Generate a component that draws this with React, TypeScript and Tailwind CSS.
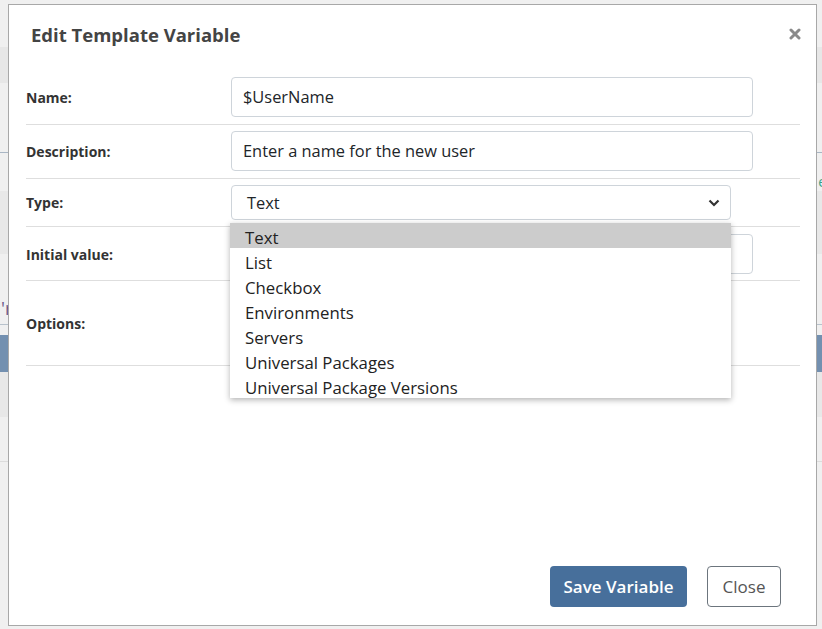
const font = "font-['Open_Sans','Noto_Sans',sans-serif]";

const options = [
  "Text",
  "List",
  "Checkbox",
  "Environments",
  "Servers",
  "Universal Packages",
  "Universal Package Versions",
];

// the page behind the modal; only its edges show
function Backdrop() {
  return (
    <div className="flex h-full flex-col">
      <div className="h-[47px]" />
      <div className="h-[36px] bg-[#e7e7e7]" />
      <div className="h-[69px]" />
      <div className="h-px bg-[#a9b6c4]" />
      <div className="flex h-[38px] items-end justify-end text-[14px] leading-[14px] text-[#3aa08a]">
        <span className="mr-[-4px] pb-[2px]">e</span>
      </div>
      <div className="h-[63px] bg-[#e8e8e8]" />
      <div className="h-[70px] pt-[44px] pl-px text-[18px] leading-[20px] text-[#6b5b8a]">'r</div>
      <div className="h-px bg-[#b8c2cc]" />
      <div className="h-[10px]" />
      <div className="h-[37px] bg-[#7390b0]" />
      <div className="h-[45px] bg-[#e8e8e8]" />
      <div className="h-[44px]" />
      <div className="h-px bg-[#dcdcdc]" />
    </div>
  );
}

function Row({
  label,
  className,
  children,
}: {
  label: string;
  className: string;
  children?: React.ReactNode;
}) {
  return (
    <div className={`flex items-center border-b border-[#dedede] ${className}`}>
      <div className="w-[205px] shrink-0 text-[14px] font-bold text-[#333]">{label}</div>
      <div className="relative">{children}</div>
    </div>
  );
}

function TextBox({ value }: { value: string }) {
  return (
    <div className="flex h-[40px] w-[522px] items-center rounded-[4px] border border-[#ced4da] px-[11px] text-[16.4px] text-[#212529]">
      {value}
    </div>
  );
}

export default function App() {
  return (
    <div className={`relative h-[629px] w-[822px] overflow-hidden bg-[#f0f0f0] ${font}`}>
      <Backdrop />

      <div className="absolute left-[8px] top-[4px] flex h-[622px] w-[809px] flex-col border border-[#a8a8a8] bg-white">
        <div className="flex h-[59px] items-center justify-between pl-[22px] pr-[15px]">
          <h1 className="text-[18.5px] font-bold text-[#444]">Edit Template Variable</h1>
          <svg width="12" height="12" viewBox="0 0 12 12" className="mb-[1px]">
            <path d="M2 2 L10 10 M10 2 L2 10" stroke="#8a8a8a" strokeWidth="3" strokeLinecap="round" />
          </svg>
        </div>

        <div className="pl-[17px] pr-[16px]">
          <Row label="Name:" className="pt-[13px] pb-[7px]">
            <TextBox value="$UserName" />
          </Row>
          <Row label="Description:" className="pt-[6px] pb-[7px]">
            <TextBox value="Enter a name for the new user" />
          </Row>
          <Row label="Type:" className="pt-[6px] pb-[6px]">
            <div className="flex h-[35px] w-[500px] items-center justify-between rounded-[4px] border border-[#ced4da] pl-[15px] pr-[10px] text-[16.4px] text-[#212529]">
              <span className="pt-[2px]">Text</span>
              <svg width="12" height="8" viewBox="0 0 12 8">
                <path d="M1.5 1.5 L6 6 L10.5 1.5" fill="none" stroke="#333" strokeWidth="2.2" />
              </svg>
            </div>
            <ul className="absolute left-[-1px] top-[38px] z-10 w-[501px] bg-white shadow-[0_2px_6px_rgba(0,0,0,0.3)]">
              {options.map((o, i) => (
                <li
                  key={o}
                  className={`h-[25px] pl-[15px] pt-[2px] text-[16.8px] leading-[25px] text-[#222] ${i === 0 ? "bg-[#cccccc]" : ""}`}
                >
                  {o}
                </li>
              ))}
            </ul>
          </Row>
          <Row label="Initial value:" className="pt-[7px] pb-[6px]">
            <TextBox value="" />
          </Row>
          <Row label="Options:" className="h-[85px]" />
        </div>

        <div className="mt-auto flex justify-end gap-[20px] pb-[18px] pr-[35px]">
          <button className="h-[41px] w-[137px] rounded-[4px] bg-[#476f9b] text-[17px] font-semibold text-white">
            Save Variable
          </button>
          <button className="h-[41px] w-[74px] rounded-[4px] border border-[#6c757d] bg-white text-[17px] text-[#555]">
            Close
          </button>
        </div>
      </div>
    </div>
  );
}
